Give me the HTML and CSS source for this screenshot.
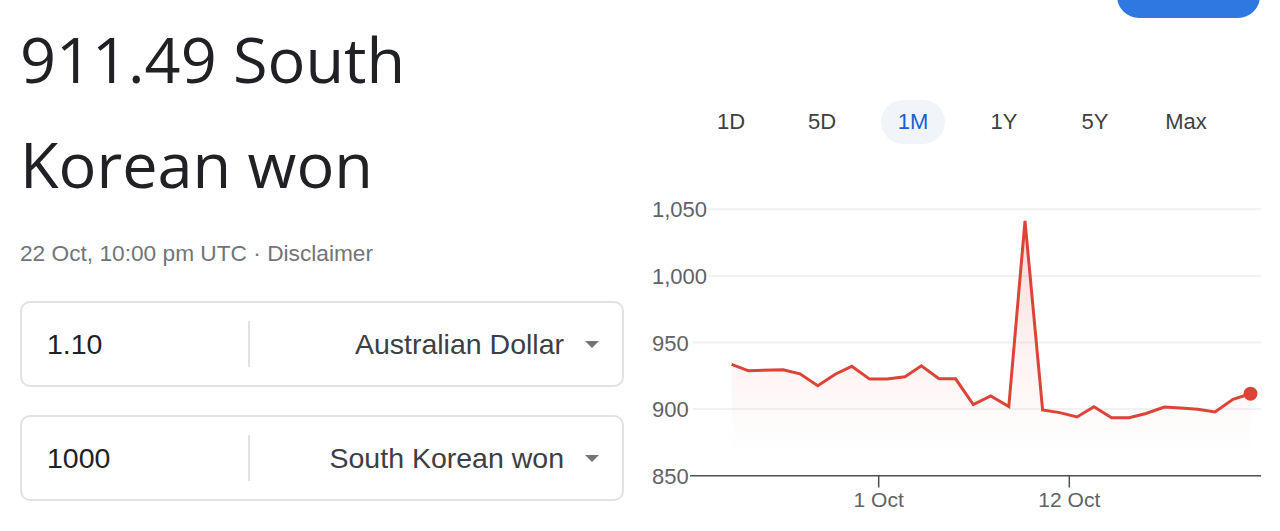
FILE: index.html
```html
<!DOCTYPE html>
<html lang="en">
<head>
<meta charset="utf-8">
<title>AUD to KRW</title>
<link rel="stylesheet" href="styles.css">
</head>
<body>
<div class="page">
  <section class="summary">
    <h1 class="result">911.49 South Korean won</h1>
    <p class="meta">22 Oct, 10:00 pm UTC · <span class="disclaimer">Disclaimer</span></p>
    <div class="converter">
      <div class="field">
        <div class="amount">1.10</div>
        <div class="divider"></div>
        <div class="currency"><span>Australian Dollar</span><span class="caret"></span></div>
      </div>
      <div class="field">
        <div class="amount">1000</div>
        <div class="divider"></div>
        <div class="currency"><span>South Korean won</span><span class="caret"></span></div>
      </div>
    </div>
  </section>
  <section class="chart-panel">
    <div class="top-action"><span class="action-btn" aria-label="Action"></span></div>
    <nav class="ranges">
      <span class="range">1D</span>
      <span class="range">5D</span>
      <span class="range active">1M</span>
      <span class="range">1Y</span>
      <span class="range">5Y</span>
      <span class="range">Max</span>
    </nav>
    <svg class="chart" width="640" height="341" viewBox="0 0 640 341">
      <defs>
        <linearGradient id="area" x1="0" y1="20" x2="0" y2="265" gradientUnits="userSpaceOnUse">
          <stop offset="0" stop-color="#db4437" stop-opacity="0.22"/>
          <stop offset="0.55" stop-color="#db4437" stop-opacity="0.07"/>
          <stop offset="1" stop-color="#db4437" stop-opacity="0"/>
        </linearGradient>
      </defs>
      <g class="grid">
        <line x1="68" y1="19.3" x2="621" y2="19.3"/>
        <line x1="68" y1="85.9" x2="621" y2="85.9"/>
        <line x1="53" y1="152.5" x2="621" y2="152.5"/>
        <line x1="53" y1="219.1" x2="621" y2="219.1"/>
      </g>
      <g class="ylabels">
        <text x="12" y="27.3">1,050</text>
        <text x="12" y="93.9">1,000</text>
        <text x="12" y="160.5">950</text>
        <text x="12" y="227.1">900</text>
        <text x="12" y="293.7">850</text>
      </g>
      <polygon class="area" points="91.6,174.3 108.5,180.8 143,179.7 160,183.8 177.8,195.7 195.2,184.2 211.8,176.3 229.6,189.1 247,189.1 265,186.8 281.4,175.8 299,188.8 315.6,188.8 333.3,214.5 350.7,205.9 368.8,216.6 385,31 402.6,220 419.6,222.6 437,227 454,216.7 471.5,227.7 489,227.7 506,223.5 524.3,217 540.5,218 557.7,219.3 575,222 593,209.3 610.5,203.8 610.5,265 91.6,265"/>
      <polyline class="series" points="91.6,174.3 108.5,180.8 143,179.7 160,183.8 177.8,195.7 195.2,184.2 211.8,176.3 229.6,189.1 247,189.1 265,186.8 281.4,175.8 299,188.8 315.6,188.8 333.3,214.5 350.7,205.9 368.8,216.6 385,31 402.6,220 419.6,222.6 437,227 454,216.7 471.5,227.7 489,227.7 506,223.5 524.3,217 540.5,218 557.7,219.3 575,222 593,209.3 610.5,203.8"/>
      <circle class="dot" cx="610.5" cy="203.8" r="7"/>
      <g class="axis">
        <line x1="50" y1="285.7" x2="621" y2="285.7"/>
        <line x1="238.7" y1="285.7" x2="238.7" y2="297.5"/>
        <line x1="429.3" y1="285.7" x2="429.3" y2="297.5"/>
      </g>
      <g class="xlabels">
        <text x="238.7" y="317">1 Oct</text>
        <text x="429.3" y="317">12 Oct</text>
      </g>
    </svg>
  </section>
</div>
</body>
</html>
```
FILE: styles.css
```css
html, body {
  margin: 0;
  padding: 0;
  background: #ffffff;
}

body {
  font-family: "Liberation Sans", Arial, sans-serif;
  overflow: hidden;
}

.page {
  display: flex;
  width: 1280px;
  height: 531px;
}

.summary {
  width: 620px;
  padding-left: 20px;
}

.result {
  margin: 6px 0 0;
  max-width: 480px;
  font-family: "Open Sans", Roboto, sans-serif;
  font-weight: 400;
  font-size: 63px;
  line-height: 105px;
  color: #202124;
}

.meta {
  margin: 22px 0 0;
  font-size: 22.7px;
  line-height: 30px;
  color: #70757a;
}

.converter {
  margin-top: 33px;
  width: 604px;
  display: flex;
  flex-direction: column;
  gap: 28px;
}

.field {
  box-sizing: border-box;
  height: 86px;
  border: 2px solid #e1e2e5;
  border-radius: 10px;
  display: flex;
  align-items: center;
  padding: 0 23px 0 25px;
}

.amount {
  width: 201px;
  font-size: 28.5px;
  color: #202124;
}

.divider {
  width: 2px;
  height: 46px;
  background: #e1e2e4;
}

.currency {
  flex: 1;
  display: flex;
  justify-content: flex-end;
  align-items: center;
  gap: 21px;
  font-size: 28.5px;
  color: #3c4043;
}

.caret {
  width: 0;
  height: 0;
  border-left: 7.5px solid transparent;
  border-right: 7.5px solid transparent;
  border-top: 7px solid #757575;
}

.chart-panel {
  width: 640px;
  display: flex;
  flex-direction: column;
}

.top-action {
  height: 18px;
  display: flex;
  justify-content: flex-end;
  padding-right: 20px;
}

.action-btn {
  width: 143px;
  height: 44px;
  margin-top: -26px;
  border-radius: 22px;
  background: #2f77e1;
}

.ranges {
  display: flex;
  gap: 27px;
  padding-left: 59px;
  margin-top: 82px;
}

.range {
  width: 64px;
  height: 44px;
  border-radius: 22px;
  display: flex;
  align-items: center;
  justify-content: center;
  font-size: 22px;
  color: #3c4043;
}

.range.active {
  background: #f1f4f9;
  color: #1a5fd0;
}

.chart {
  display: block;
  margin-top: 46px;
}

.grid line {
  stroke: #f1f1f1;
  stroke-width: 2;
}

.ylabels text {
  font-family: "Liberation Sans", Arial, sans-serif;
  font-size: 22px;
  fill: #5f6368;
}

.xlabels text {
  font-family: "Liberation Sans", Arial, sans-serif;
  font-size: 21px;
  fill: #5f6368;
  text-anchor: middle;
}

.area {
  fill: url(#area);
}

.series {
  fill: none;
  stroke: #db4437;
  stroke-width: 3;
}

.dot {
  fill: #db4437;
}

.axis line {
  stroke: #4d5156;
  stroke-width: 1.5;
}
```
